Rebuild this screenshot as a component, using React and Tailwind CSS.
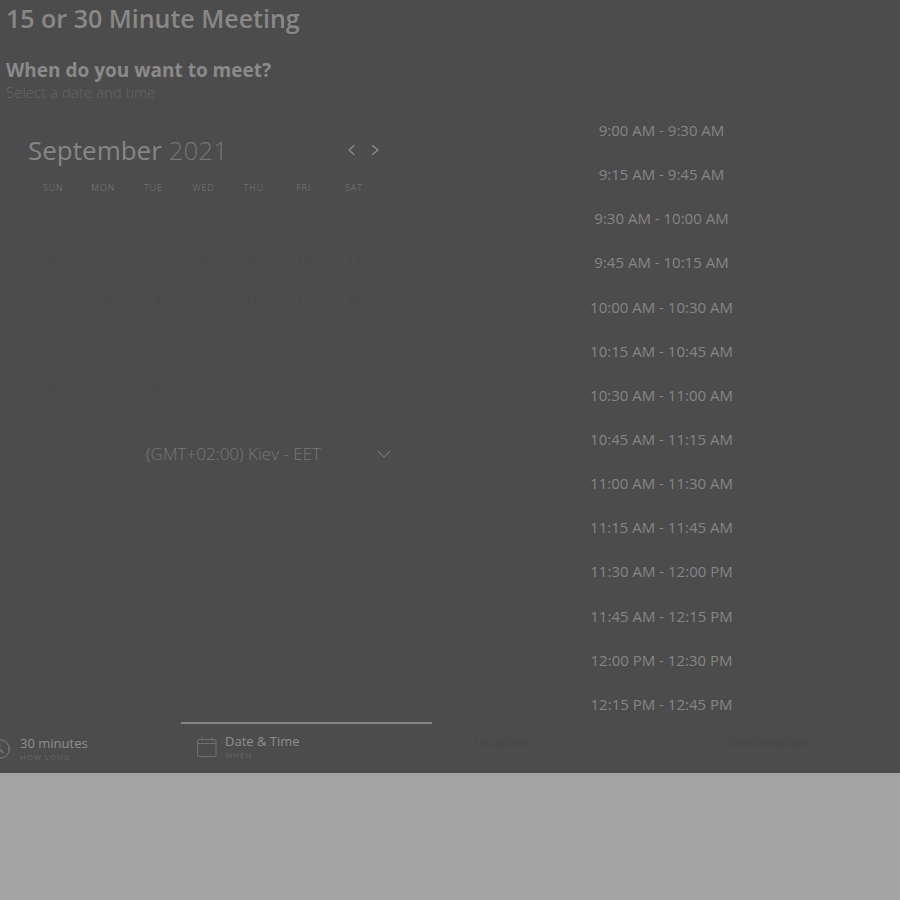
import React from "react";

const slots = [
  "9:00 AM - 9:30 AM",
  "9:15 AM - 9:45 AM",
  "9:30 AM - 10:00 AM",
  "9:45 AM - 10:15 AM",
  "10:00 AM - 10:30 AM",
  "10:15 AM - 10:45 AM",
  "10:30 AM - 11:00 AM",
  "10:45 AM - 11:15 AM",
  "11:00 AM - 11:30 AM",
  "11:15 AM - 11:45 AM",
  "11:30 AM - 12:00 PM",
  "11:45 AM - 12:15 PM",
  "12:00 PM - 12:30 PM",
  "12:15 PM - 12:45 PM",
];

const weekdays = ["SUN", "MON", "TUE", "WED", "THU", "FRI", "SAT"];

const weeks = [
  [29, 30, 31, 1, 2, 3, 4],
  [5, 6, 7, 8, 9, 10, 11],
  [12, 13, 14, 15, 16, 17, 18],
  [19, 20, 21, 22, 23, 24, 25],
  [26, 27, 28, 29, 30, 1, 2],
];

function Icon({ children, className }) {
  return (
    <svg
      aria-hidden="true"
      viewBox="0 0 20 20"
      fill="none"
      stroke="currentColor"
      strokeLinecap="round"
      strokeLinejoin="round"
      className={className}
    >
      {children}
    </svg>
  );
}

function Calendar() {
  return (
    <section className="ml-7 w-[356px]">
      <div className="flex h-9 items-center justify-between">
        <h2 className="text-[26px] leading-8 text-[#868686]">
          September <span className="font-light text-[#747474]">2021</span>
        </h2>
        <div className="flex gap-1 text-[#8c8c8c]">
          <button type="button" aria-label="Previous month" className="flex h-5 w-5 items-center justify-center">
            <Icon className="h-5 w-5">
              <path d="M14 5.500 9 10l5 4.500" strokeWidth="1.3" />
            </Icon>
          </button>
          <button type="button" aria-label="Next month" className="flex h-5 w-5 items-center justify-center">
            <Icon className="h-5 w-5">
              <path d="M8.500 5.500 14 10l-5.500 4.500" strokeWidth="1.3" />
            </Icon>
          </button>
        </div>
      </div>
      <table className="mt-3 w-[351px] table-fixed text-center">
        <thead>
          <tr className="h-4">
            {weekdays.map((day) => (
              <th key={day} scope="col" className="p-0 text-[9px] leading-4 font-light tracking-widest text-[#7c7c7c]">
                {day}
              </th>
            ))}
          </tr>
        </thead>
        <tbody>
          {weeks.map((week, row) => (
            <tr key={row} className="h-[42px]">
              {week.map((day) => (
                <td key={day} className="p-0">
                  <button type="button" className="h-8 w-8 text-sm text-[#4a4a4a]">
                    {day}
                  </button>
                </td>
              ))}
            </tr>
          ))}
        </tbody>
      </table>
    </section>
  );
}

function Step({ title, caption, icon, className, titleClass, captionClass }) {
  return (
    <button type="button" className={"flex items-center text-left " + className}>
      {icon}
      <span className="flex flex-col">
        <span className={"leading-4 " + titleClass}>{title}</span>
        <span className={"text-[8px] leading-3 tracking-widest " + captionClass}>{caption}</span>
      </span>
    </button>
  );
}

export default function App() {
  return (
    <div className="min-h-screen overflow-hidden bg-[#a3a3a3] font-['Open_Sans','Noto_Sans',sans-serif]">
      <main className="bg-[#4c4c4c]">
        <header className="px-1.5 pt-0.5">
          <h1 className="text-[25px] leading-8 font-semibold text-[#888888]">15 or 30 Minute Meeting</h1>
          <p className="mt-[22px] text-[19px] leading-7 font-bold text-[#8a8a8a]">When do you want to meet?</p>
          <p className="text-[15px] leading-4 font-light text-[#666666]">Select a date and time</p>
        </header>

        <div className="mt-2 grid grid-cols-[47%_53%]">
          <div className="pt-6 pb-64">
            <Calendar />
            <div className="relative mt-8 ml-[146px] flex w-[246px] items-center text-[#787878]">
              <select
                aria-label="Time zone"
                className="h-8 w-full appearance-none bg-transparent text-[17px] leading-8 font-light"
                defaultValue="kiev"
              >
                <option value="kiev">(GMT+02:00) Kiev - EET</option>
              </select>
              <Icon className="pointer-events-none absolute right-0 h-4 w-4">
                <path d="m2.500 6.500 7.500 7 7.500-7" strokeWidth="1.3" />
              </Icon>
            </div>
          </div>

          <ul aria-label="Available times" className="grid auto-rows-fr">
            {slots.map((slot) => (
              <li key={slot}>
                <button type="button" className="h-full w-full text-center text-[15px] leading-5 text-[#858585]">
                  {slot}
                </button>
              </li>
            ))}
          </ul>
        </div>

        <nav aria-label="Booking steps" className="-mt-1 -mr-[34px] -ml-[70px] grid h-[51px] grid-cols-4">
          <Step
            title="30 minutes"
            caption="HOW LONG"
            className="gap-2.5 border-t-2 border-transparent pl-[60px]"
            titleClass="text-[13px] text-[#8f8f8f]"
            captionClass="text-[#666666]"
            icon={
              <Icon className="h-5 w-5 text-[#7d7d7d]">
                <circle cx="10" cy="10" r="9.300" />
                <path d="M9.500 4v6.500l3.500 3" strokeWidth="1.4" />
              </Icon>
            }
          />
          <Step
            title="Date &amp; Time"
            caption="WHEN"
            className="gap-2 border-t-2 border-[#858585] pb-[3px] pl-4"
            titleClass="text-[13px] text-[#8f8f8f]"
            captionClass="text-[#666666]"
            icon={
              <Icon className="h-5 w-5 text-[#707070]">
                <rect x=".5" y="2.500" width="18.500" height="17" rx="1" />
                <path d="M.5 6.500h18.500M5 .5v3M15 .5v3" />
              </Icon>
            }
          />
          <Step
            title="Location"
            caption="WHERE"
            className="gap-2 border-t-2 border-transparent pl-3.5"
            titleClass="text-xs font-bold text-[#494949]"
            captionClass="text-[#4a4a4a]"
            icon={
              <Icon className="h-5 w-5 text-[#4a4a4a]">
                <path d="M10 19S3 12.500 3 7.500a7 7 0 0 1 14 0C17 12.500 10 19 10 19Z" />
                <circle cx="10" cy="7.500" r="2.500" />
              </Icon>
            }
          />
          <Step
            title="Confirmation"
            caption="WHO"
            className="gap-2 border-t-2 border-transparent pl-[18px]"
            titleClass="text-xs font-bold text-[#494949]"
            captionClass="text-[#4a4a4a]"
            icon={
              <Icon className="h-5 w-5 text-[#4a4a4a]">
                <rect x="1" y="2" width="18" height="16" rx="2" />
                <path d="m6 10 3 3 6-6" />
              </Icon>
            }
          />
        </nav>
      </main>
    </div>
  );
}
